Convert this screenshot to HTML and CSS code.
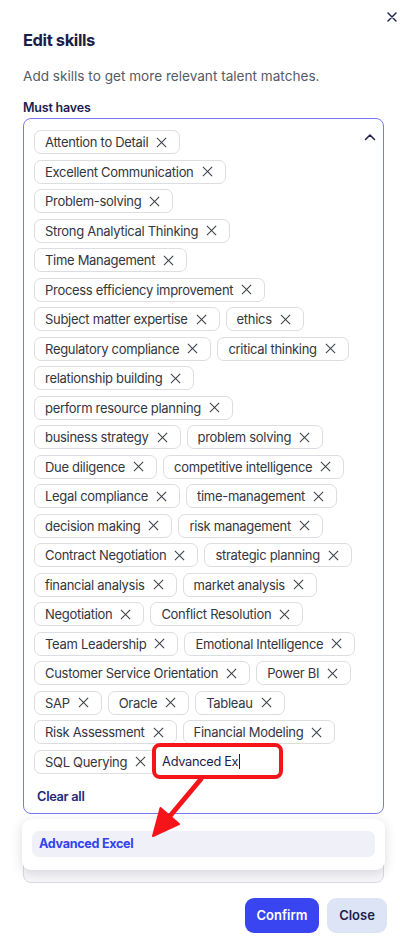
FILE: index.html
```html
<!DOCTYPE html>
<html lang="en">
<head>
<meta charset="utf-8">
<title>Edit skills</title>
<link rel="stylesheet" href="styles.css">
</head>
<body>
<div class="modal">
  <div class="top-bar">
    <button class="close-x" aria-label="Close">
      <svg width="10" height="10" viewBox="0 0 10 10"><path d="M1 1L9 9M9 1L1 9" stroke="#1b1d4d" stroke-width="1.4" stroke-linecap="round"/></svg>
    </button>
  </div>
  <h1 class="title">Edit skills</h1>
  <p class="subtitle">Add skills to get more relevant talent matches.</p>
  <div class="label">Must haves</div>
  <div class="field-wrap">
    <div class="field">
      <div class="field-row">
        <div class="chips">
          <span class="chip">Attention to Detail<i class="x"></i></span>
          <span class="chip">Excellent Communication<i class="x"></i></span>
          <span class="chip">Problem-solving<i class="x"></i></span>
          <span class="chip">Strong Analytical Thinking<i class="x"></i></span>
          <span class="chip">Time Management<i class="x"></i></span>
          <span class="chip">Process efficiency improvement<i class="x"></i></span>
          <span class="chip">Subject matter expertise<i class="x"></i></span>
          <span class="chip">ethics<i class="x"></i></span>
          <span class="chip">Regulatory compliance<i class="x"></i></span>
          <span class="chip">critical thinking<i class="x"></i></span>
          <span class="chip">relationship building<i class="x"></i></span>
          <span class="chip">perform resource planning<i class="x"></i></span>
          <span class="chip">business strategy<i class="x"></i></span>
          <span class="chip">problem solving<i class="x"></i></span>
          <span class="chip">Due diligence<i class="x"></i></span>
          <span class="chip">competitive intelligence<i class="x"></i></span>
          <span class="chip">Legal compliance<i class="x"></i></span>
          <span class="chip">time-management<i class="x"></i></span>
          <span class="chip">decision making<i class="x"></i></span>
          <span class="chip">risk management<i class="x"></i></span>
          <span class="chip">Contract Negotiation<i class="x"></i></span>
          <span class="chip">strategic planning<i class="x"></i></span>
          <span class="chip">financial analysis<i class="x"></i></span>
          <span class="chip">market analysis<i class="x"></i></span>
          <span class="chip">Negotiation<i class="x"></i></span>
          <span class="chip">Conflict Resolution<i class="x"></i></span>
          <span class="chip">Team Leadership<i class="x"></i></span>
          <span class="chip">Emotional Intelligence<i class="x"></i></span>
          <span class="chip">Customer Service Orientation<i class="x"></i></span>
          <span class="chip">Power BI<i class="x"></i></span>
          <span class="chip">SAP<i class="x"></i></span>
          <span class="chip">Oracle<i class="x"></i></span>
          <span class="chip">Tableau<i class="x"></i></span>
          <span class="chip">Risk Assessment<i class="x"></i></span>
          <span class="chip">Financial Modeling<i class="x"></i></span>
          <span class="chip">SQL Querying<i class="x"></i></span>
          <span class="input-chip"><span class="typed">Advanced Ex</span><span class="caret"></span><span class="annot-box"></span></span>
        </div>
        <div class="chevron">
          <svg width="12" height="8" viewBox="0 0 12 8"><path d="M1.5 6.5L6 2L10.5 6.5" fill="none" stroke="#1b1d4d" stroke-width="1.5" stroke-linecap="round" stroke-linejoin="round"/></svg>
        </div>
      </div>
      <button class="clear-all">Clear all</button>
    </div>
    <div class="dropdown">
      <div class="option">Advanced Excel</div>
    </div>
  </div>
  <div class="field second"></div>
  <div class="footer">
    <button class="btn primary">Confirm</button>
    <button class="btn secondary">Close</button>
  </div>
  <svg class="annot-arrow" width="400" height="946" viewBox="0 0 400 946">
    <line x1="201" y1="779" x2="170" y2="816" stroke="#f5141a" stroke-width="5" stroke-linecap="round"/>
    <polygon points="153,836 160.5,808 179,824" fill="#f5141a" stroke="#f5141a" stroke-width="2" stroke-linejoin="round"/>
  </svg>
</div>
</body>
</html>
```

FILE: styles.css
```css
* { box-sizing: border-box; }
html, body { margin: 0; padding: 0; background: #ffffff; }
body {
  font-family: Inter, "Noto Sans", "Liberation Sans", sans-serif;
  color: #1b1d4d;
  width: 400px;
  height: 946px;
  overflow: hidden;
}
.modal {
  position: relative;
  padding: 0 16px 0 23px;
  height: 946px;
}
.top-bar {
  display: flex;
  justify-content: flex-end;
  height: 27px;
  padding-top: 12px;
  margin-right: -13px;
}
.close-x {
  border: 0;
  background: none;
  padding: 0;
  width: 10px;
  height: 10px;
  display: flex;
}
.title {
  margin: 2px 0 0;
  font-size: 16.5px;
  line-height: 22px;
  font-weight: 700;
  letter-spacing: -0.4px;
  color: #1b1d4d;
}
.subtitle {
  margin: 16px 0 0;
  font-size: 13.6px;
  line-height: 18px;
  color: #555a66;
}
.label {
  margin-top: 14px;
  font-size: 12.5px;
  line-height: 18px;
  font-weight: 600;
  letter-spacing: -0.2px;
  color: #1b1d4d;
}
.field-wrap {
  position: relative;
  margin-top: 1px;
}
.field {
  border: 1px solid #767af2;
  border-radius: 8px;
  padding: 11px 4px 0 10px;
}
.field-row {
  display: flex;
  align-items: flex-start;
}
.chips {
  flex: 1;
  display: flex;
  flex-wrap: wrap;
  gap: 5.5px 6px;
}
.chip {
  display: inline-flex;
  align-items: center;
  height: 24px;
  padding: 0 12px 0 10px;
  border: 1px solid #dcdde0;
  border-radius: 7px;
  font-size: 13px;
  letter-spacing: -0.3px;
  color: #333640;
  white-space: nowrap;
}
.x {
  display: inline-block;
  position: relative;
  width: 11px;
  height: 11px;
  margin-left: 8px;
}
.x::before, .x::after {
  content: "";
  position: absolute;
  left: 5px;
  top: -1px;
  width: 1.2px;
  height: 13px;
  background: #3a3d46;
  transform: rotate(45deg);
}
.x::after { transform: rotate(-45deg); }
.input-chip {
  position: relative;
  display: inline-flex;
  align-items: center;
  width: 131px;
  height: 24px;
  margin-left: -13px;
  padding: 0 10px;
  background: #ffffff;
  font-size: 12.8px;
  letter-spacing: -0.3px;
  color: #1b1d4d;
}
.caret {
  display: inline-block;
  width: 1px;
  height: 15px;
  background: #1b1d4d;
  margin-left: 1px;
}
.annot-box {
  position: absolute;
  left: 0;
  right: 0;
  top: -7px;
  bottom: -5px;
  border: 4px solid #f5141a;
  border-radius: 8px;
}
.chevron {
  width: 18px;
  height: 18px;
  margin-top: -2px;
  display: flex;
  align-items: center;
  justify-content: center;
}
.clear-all {
  display: block;
  border: 0;
  background: none;
  font-family: inherit;
  font-size: 12.8px;
  font-weight: 600;
  letter-spacing: -0.3px;
  color: #1e2a78;
  padding: 7px 3px 7px 3px;
  margin-top: 7px;
  line-height: 18px;
}
.dropdown {
  position: absolute;
  left: -1px;
  right: -1px;
  top: calc(100% + 5px);
  background: #ffffff;
  border-radius: 9px;
  box-shadow: 0 3px 12px rgba(30, 30, 60, 0.16);
  padding: 12px 10px 13px;
  z-index: 2;
}
.option {
  background: #f0f1f8;
  border-radius: 7px;
  height: 26px;
  line-height: 26px;
  padding: 0 7px;
  font-size: 12.6px;
  font-weight: 700;
  letter-spacing: -0.3px;
  color: #3441ef;
}
.field.second {
  margin-top: 5px;
  height: 64px;
  border: 1px solid #d9dadf;
  padding: 0;
  background: #f7f7f9;
}
.footer {
  display: flex;
  justify-content: flex-end;
  gap: 8px;
  margin-top: 15px;
  margin-right: -3px;
}
.btn {
  height: 35px;
  border: 0;
  border-radius: 9px;
  font-family: inherit;
  font-size: 13px;
  font-weight: 600;
  padding: 0 10px;
}
.primary { background: #3a45f2; color: #ffffff; width: 74px; }
.secondary { background: #dde4f5; color: #1b1d4d; width: 60px; }
.annot-arrow {
  position: absolute;
  left: 0;
  top: 0;
  pointer-events: none;
  z-index: 5;
}
```
